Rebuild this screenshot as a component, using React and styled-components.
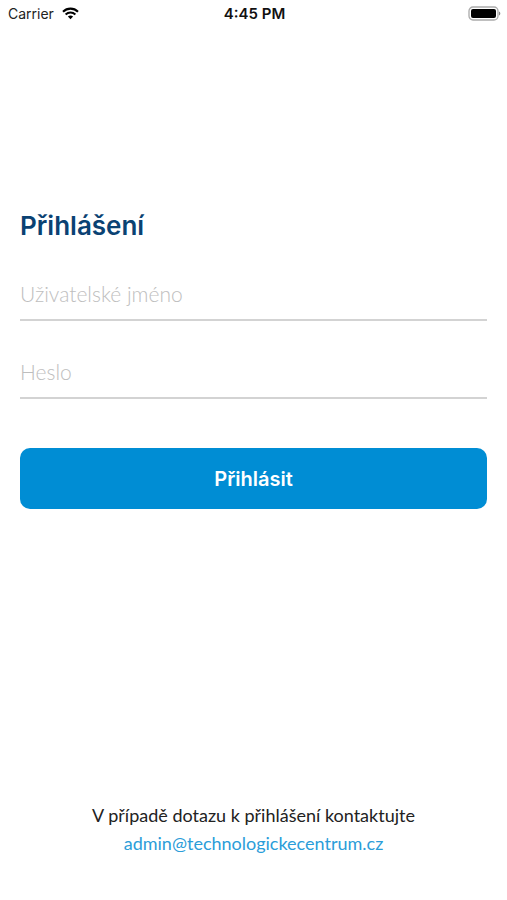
import { useState } from "react";
import styled, { createGlobalStyle } from "styled-components";

const GlobalStyle = createGlobalStyle`
  body {
    margin: 0;
    background-color: #fff;
  }

  * {
    box-sizing: border-box;
  }
`;

const Screen = styled.div`
  display: flex;
  flex-direction: column;
  min-height: 100vh;
  font-family: Lato, "Open Sans", sans-serif;
`;

const StatusBar = styled.header`
  display: grid;
  grid-template-columns: 1fr auto 1fr;
  align-items: center;
  height: 27px;
  padding: 0 6px 0 8px;
  font-family: Inter, "Liberation Sans", sans-serif;
  font-size: 14px;
  color: #222;
`;

const Carrier = styled.div`
  display: flex;
  align-items: center;
  gap: 8px;
`;

const Time = styled.time`
  font-size: 15px;
  font-weight: 600;
  color: #111;
`;

const Battery = styled.div`
  display: flex;
  justify-content: flex-end;
  height: 16px;
`;

const Form = styled.form`
  display: flex;
  flex-direction: column;
  padding: 181px 20px 0;
`;

const Title = styled.h1`
  margin: 0 0 34px;
  font-family: Inter, sans-serif;
  font-size: 26px;
  font-weight: 600;
  line-height: 36px;
  color: #0a4273;
`;

const Input = styled.input`
  width: 100%;
  height: 43px;
  margin-bottom: 35px;
  padding: 0 0 10px;
  border: none;
  border-bottom: 2px solid #d3d3d3;
  border-radius: 0;
  outline: none;
  background: transparent;
  font-family: inherit;
  font-size: 21px;
  font-weight: 300;
  color: #222;

  &::placeholder {
    color: #bebebe;
    opacity: 1;
  }

  &:focus {
    border-bottom-color: #008dd4;
  }
`;

const Button = styled.button`
  height: 61px;
  margin-top: 14px;
  border: none;
  border-radius: 10px;
  background-color: #008dd4;
  font-family: Inter, sans-serif;
  font-size: 20px;
  font-weight: 600;
  color: #fff;
  cursor: pointer;
`;

const Footer = styled.footer`
  margin-top: auto;
  padding: 40px 20px 43px;
  font-size: 18px;
  line-height: 28px;
  text-align: center;
  color: #222;

  p {
    margin: 0;
  }
`;

const MailLink = styled.a`
  color: #2b9dd9;
  text-decoration: none;
`;

const WifiIcon = () => (
  <svg width="17" height="13" viewBox="0 0 17 13" fill="none" aria-hidden="true">
    <path d="M1 4.7C5.2.6 11.8.6 16 4.7" stroke="#000" strokeWidth="2.1" />
    <path d="M3.6 7.4c2.8-2.6 7-2.6 9.8 0" stroke="#000" strokeWidth="2" />
    <path d="M5.9 9.6c1.5-1.4 3.7-1.4 5.2 0L8.5 12.3z" fill="#000" />
  </svg>
);

const BatteryIcon = () => (
  <svg width="33" height="16" viewBox="0 0 33 16" aria-hidden="true">
    <rect x="1" y="1" width="29" height="13" rx="4" fill="#fff" stroke="#aaa" strokeWidth="1.3" />
    <rect x="3" y="3" width="25" height="9" rx="2" fill="#000" />
    <path d="M31 5.5c1.8.8 1.8 3.2 0 4z" fill="#888" />
  </svg>
);

const App = () => {
  const [login, setLogin] = useState({ username: "", password: "" });

  const handleChange = (e) => {
    const { name, value } = e.target;
    setLogin({ ...login, [name]: value });
  };

  const handleSubmit = (e) => {
    e.preventDefault();
  };

  return (
    <Screen>
      <GlobalStyle />
      <StatusBar>
        <Carrier>
          <span>Carrier</span>
          <WifiIcon />
        </Carrier>
        <Time>4:45 PM</Time>
        <Battery>
          <BatteryIcon />
        </Battery>
      </StatusBar>
      <Form onSubmit={handleSubmit}>
        <Title>Přihlášení</Title>
        <Input
          type="text"
          name="username"
          aria-label="Uživatelské jméno"
          placeholder="Uživatelské jméno"
          value={login.username}
          onChange={handleChange}
        />
        <Input
          type="password"
          name="password"
          aria-label="Heslo"
          placeholder="Heslo"
          value={login.password}
          onChange={handleChange}
        />
        <Button type="submit">Přihlásit</Button>
      </Form>
      <Footer>
        <p>V případě dotazu k přihlášení kontaktujte</p>
        <MailLink href="mailto:admin@technologickecentrum.cz">
          admin@technologickecentrum.cz
        </MailLink>
      </Footer>
    </Screen>
  );
};

export default App;
